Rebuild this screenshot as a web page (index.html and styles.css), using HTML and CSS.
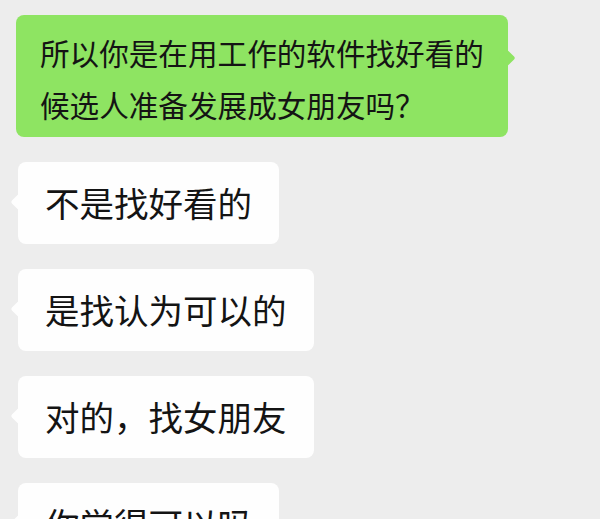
FILE: index.html
```html
<!DOCTYPE html>
<html lang="zh-CN">
<head>
<meta charset="UTF-8">
<meta name="viewport" content="width=device-width, initial-scale=1.0">
<title>聊天记录</title>
<link rel="stylesheet" href="styles.css">
</head>
<body>
<div class="chat">
    <div class="msg mine">所以你是在用工作的软件找好看的<br>候选人准备发展成女朋友吗？</div>
    <div class="msg other">不是找好看的</div>
    <div class="msg other">是找认为可以的</div>
    <div class="msg other">对的，找女朋友</div>
    <div class="msg other">你觉得可以吗</div>
</div>
</body>
</html>
```

FILE: styles.css
```css
body {
    margin: 0;
    padding: 0;
    background-color: #ededed;
    font-family: "Noto Sans CJK SC", "Noto Sans", sans-serif;
    color: #141414;
    overflow: hidden;
}
.chat {
    display: flex;
    flex-direction: column;
    align-items: flex-start;
    gap: 25px;
    padding: 15px 0 0 0;
}
.msg {
    position: relative;
    border-radius: 8px;
    white-space: nowrap;
}
.msg::before {
    content: "";
    position: absolute;
    width: 12px;
    height: 12px;
    border-radius: 2px;
    transform: rotate(45deg);
}
.mine {
    margin-left: 16px;
    width: 444px;
    padding: 12px 24px 6px 24px;
    background-color: #8ee462;
    font-size: 29.6px;
    line-height: 52px;
}
.mine::before {
    right: -5px;
    top: 37px;
    background-color: #8ee462;
}
.other {
    margin-left: 18px;
    padding: 15px 27px 16px 27px;
    background-color: #fefefe;
    font-size: 34.5px;
    line-height: 51px;
}
.other::before {
    left: -5px;
    top: 34px;
    background-color: #fefefe;
}
```
